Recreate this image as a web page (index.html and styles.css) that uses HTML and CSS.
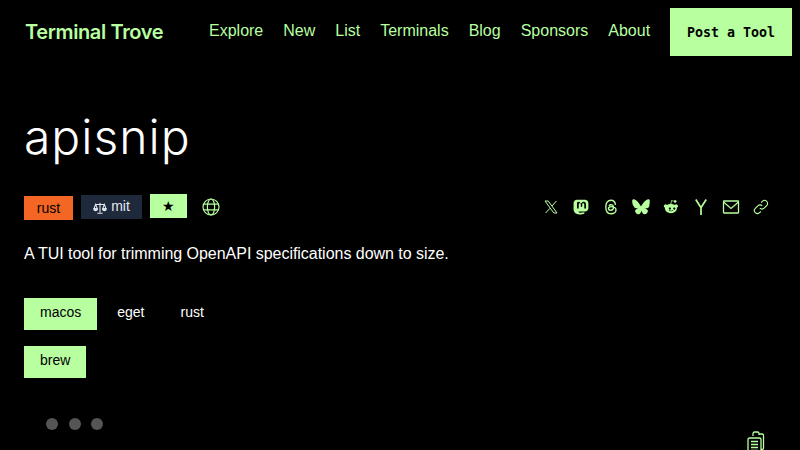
FILE: index.html
```html
<!DOCTYPE html>
<html lang="en">
<head>
    <meta charset="UTF-8">
    <meta name="viewport" content="width=device-width, initial-scale=1.0">
    <title>apisnip - Terminal Trove</title>
    <link rel="stylesheet" href="styles.css">
</head>
<body>
    <nav class="topbar">
        <a class="logo" href="#">Terminal Trove</a>
        <div class="nav-links">
            <a href="#">Explore</a>
            <a href="#">New</a>
            <a href="#">List</a>
            <a href="#">Terminals</a>
            <a href="#">Blog</a>
            <a href="#">Sponsors</a>
            <a href="#">About</a>
        </div>
        <a class="post-btn" href="#">Post a Tool</a>
    </nav>

    <main class="tool">
        <h1>apisnip</h1>
        <div class="meta">
            <div class="badges">
                <span class="badge badge-rust">rust</span>
                <span class="badge badge-mit">
                    <svg class="scale" viewBox="0 0 16 16" fill="none" stroke="currentColor" stroke-width="1.2">
                        <path d="M8 2v11M5 14h6M3 4h10M3 4l-2 5h4zM13 4l-2 5h4z"/>
                        <path d="M1 9a2 2 0 0 0 4 0zM11 9a2 2 0 0 0 4 0z" fill="currentColor"/>
                    </svg>
                    mit
                </span>
                <span class="badge badge-star">★</span>
                <svg class="icon globe" viewBox="0 0 18 18" fill="none" stroke="currentColor" stroke-width="1.2">
                    <circle cx="9" cy="9" r="8"/>
                    <ellipse cx="9" cy="9" rx="3.6" ry="8"/>
                    <path d="M1.6 6.2h14.8M1.6 11.8h14.8"/>
                </svg>
            </div>
            <div class="share">
                <svg class="icon" viewBox="0 0 16 16" fill="none" stroke="currentColor" stroke-width="1">
                    <path d="M2 2h3.2l8.8 12h-3.2zM13.4 2 9 7M7 9.300 2.600 14"/>
                </svg>
                <svg class="icon" viewBox="0 0 16 16">
                    <path fill="currentColor" fill-rule="evenodd" d="M4 .8h8c2 0 3.400 1.400 3.400 3.400v5c0 2-1.500 3.200-3.400 3.300H8.200c-1 0-2-.1-2.700-.3.200 1 1 1.500 2.400 1.500 1.200 0 2.400-.2 3.400-.5v1.500c-1.200.6-2.500.8-3.800.8-3.200 0-6.500-.9-6.900-5C.5 9 .6 7.500.6 4.200.6 2.200 2 .8 4 .8zM4 9.500h1.700V5.600c0-.9.400-1.300 1-1.300.7 0 1.100.5 1.100 1.400v2h1.400v-2c0-.9.400-1.400 1.100-1.400.6 0 1 .4 1 1.300v3.900H13v-4c0-1.800-1-2.700-2.300-2.700-.9 0-1.500.4-1.900 1L8 4.500l-.8-.7c-.4-.6-1-1-1.900-1C4 2.800 4 3.700 4 5.500z"/>
                </svg>
                <svg class="icon" viewBox="0 0 16 16" fill="none" stroke="currentColor" stroke-width="1.400">
                    <path d="M12.500 5.800C12 2.800 10.300 1.300 8 1.300 4.500 1.300 2.800 4 2.800 8s1.700 6.700 5.200 6.700c3 0 5-1.700 5-3.700 0-2.200-2-3.400-4.600-3.400-1.800 0-2.900.7-2.900 1.900 0 1.100 1 1.800 2.300 1.800 1.700 0 2.700-1.100 2.700-3 0-1.600-.9-2.600-2.400-2.600-1 0-1.700.4-2.200 1.100"/>
                </svg>
                <svg class="icon icon-wide" viewBox="0 0 18 16">
                    <path fill="currentColor" d="M4 1.200C6 2.700 8.100 5.700 9 7.400c.9-1.700 3-4.700 5-6.200 1.500-1.100 3.800-1.900 3.800.8 0 .5-.3 4.500-.5 5.100-.6 2.200-2.800 2.700-4.700 2.400 3.400.6 4.200 2.500 2.400 4.400-3.500 3.600-5-.9-5.400-2-.1-.2-.1-.3-.1-.2 0-.1 0 0-.1.200-.4 1.100-1.900 5.600-5.400 2-1.800-1.900-1-3.800 2.400-4.400-1.900.3-4.100-.2-4.700-2.400C.500 6.500.2 2.500.2 2c0-2.700 2.300-1.900 3.800-.8z"/>
                </svg>
                <svg class="icon" viewBox="0 0 16 16">
                    <path fill="currentColor" fill-rule="evenodd" d="M8.200 1.200 11 1.800a1.300 1.300 0 1 1-.1.800L8.700 2.100 8.300 5c1.400.1 2.600.5 3.500 1.100a1.700 1.700 0 1 1 2 2.600c0 .2.100.4.100.6 0 2.700-2.700 4.900-6 4.900s-6-2.200-6-4.900c0-.2 0-.4.100-.6a1.700 1.700 0 1 1 2-2.600c.9-.6 2.100-1 3.400-1.100zM5.800 9.600a1.100 1.100 0 1 0 0-.1zm4.400 0a1.100 1.100 0 1 0 0-.1zM5.700 11.600c1.300 1 3.300 1 4.600 0l-.4-.5c-1 .7-2.800.7-3.800 0z"/>
                </svg>
                <svg class="icon" viewBox="0 0 16 16" fill="none" stroke="currentColor" stroke-width="1.700">
                    <path d="M2.800 .5 8 8.600 13.200 .5M8 8.600V16"/>
                </svg>
                <svg class="icon icon-wide" viewBox="0 0 18 16" fill="none" stroke="currentColor" stroke-width="1.300">
                    <rect x="1.500" y="2" width="15" height="12" rx=".5"/>
                    <path d="M1.500 3 9 9.500 16.500 3"/>
                </svg>
                <svg class="icon" viewBox="0 0 16 16" fill="none" stroke="currentColor" stroke-width="1.100">
                    <path d="M6.800 9.200a3 3 0 0 0 4.300 0l2.600-2.600a3 3 0 0 0-4.300-4.300L8.200 3.500"/>
                    <path d="M9.200 6.800a3 3 0 0 0-4.300 0L2.300 9.400a3 3 0 0 0 4.300 4.300l1.200-1.200"/>
                </svg>
            </div>
        </div>
        <p class="tagline">A TUI tool for trimming OpenAPI specifications down to size.</p>
        <div class="tabs">
            <a class="tab tab-on" href="#">macos</a>
            <a class="tab" href="#">eget</a>
            <a class="tab" href="#">rust</a>
        </div>
        <div class="tabs">
            <a class="tab tab-on" href="#">brew</a>
        </div>
        <div class="terminal-bar">
            <div class="dots">
                <span></span>
                <span></span>
                <span></span>
            </div>
            <svg class="clip" viewBox="0 0 20 24" fill="none" stroke="currentColor" stroke-width="1.300">
                <path d="M7 6V3.500C7 2.500 7.800 2 8.500 2h3c.8 0 1.500.5 1.500 1.500V5M13 4h3c1 0 1.500.6 1.500 1.500V18c0 1-.5 1.500-1.500 1.500h-1"/>
                <rect x="2" y="8" width="13" height="16" rx="1.500"/>
                <path d="M5 11.500h7M5 14.500h7M5 17.500h7M5 20.500h7" stroke-width="1.500"/>
            </svg>
        </div>
    </main>
</body>
</html>
```

FILE: styles.css
```css
html, body {
    margin: 0;
    height: 450px;
    overflow: hidden;
}
body {
    font-family: 'Liberation Sans', sans-serif;
    background-color: #000;
    color: #fff;
}
a {
    text-decoration: none;
    color: inherit;
}
.topbar {
    display: flex;
    align-items: center;
    height: 48px;
    padding: 8px 8px 0 25px;
    color: #b8ffa0;
}
.logo {
    font-family: 'Inter', sans-serif;
    font-size: 20px;
    font-weight: 600;
    letter-spacing: -0.37px;
    width: 184px;
    flex: none;
    white-space: nowrap;
}
.nav-links {
    display: flex;
    gap: 20px;
    font-size: 16px;
    flex: 1;
    margin-bottom: 3px;
}
.post-btn {
    display: flex;
    align-items: center;
    justify-content: center;
    width: 122px;
    height: 48px;
    background: #b8ffa0;
    color: #000;
    font-family: 'DejaVu Sans Mono', monospace;
    font-size: 13.3px;
    font-weight: 700;
}
.tool {
    padding: 0 24px;
}
h1 {
    font-family: 'Inter', sans-serif;
    font-size: 48px;
    font-weight: 300;
    letter-spacing: 1px;
    line-height: 56px;
    margin: 53px 0 0;
}
.meta {
    display: flex;
    justify-content: space-between;
    align-items: center;
    margin-top: 29px;
    height: 26px;
}
.badges {
    display: flex;
    align-items: center;
    gap: 8px;
}
.badge {
    display: flex;
    align-items: center;
    justify-content: center;
    font-size: 14px;
    height: 24px;
}
.badge-rust {
    width: 49px;
    background: #f46623;
    color: #000;
    margin-top: 2px;
}
.badge-mit {
    width: 61px;
    gap: 4px;
    background: #1e293b;
    color: #e2e8f0;
    padding-bottom: 3px;
    height: 21px;
}
.badge-star {
    width: 37px;
    background: #b8ffa0;
    color: #000;
    margin-top: -2px;
}
.scale {
    width: 14px;
    height: 14px;
    margin-top: 4px;
}
.icon {
    width: 16px;
    height: 16px;
    color: #b8ffa0;
    flex: none;
}
.globe {
    width: 18px;
    height: 18px;
    margin-left: 7px;
}
.share {
    display: flex;
    align-items: center;
}
.share .icon {
    margin: 0 7px;
}
.share .icon-wide {
    width: 18px;
    margin: 0 6px;
}
.tagline {
    font-size: 16px;
    letter-spacing: -0.03px;
    line-height: 24px;
    margin: 22px 0 0;
}
.tabs {
    display: flex;
    margin-top: 16px;
}
.tagline + .tabs {
    margin-top: 32px;
}
.tab {
    display: block;
    font-size: 14px;
    line-height: 20px;
    padding: 4px 16px 8px;
    height: 20px;
    margin-right: 4px;
}
.tab-on {
    background: #b8ffa0;
    color: #000;
}
.terminal-bar {
    display: flex;
    justify-content: space-between;
    margin-top: 40px;
    padding: 0 10px 0 22px;
}
.dots {
    display: flex;
    gap: 10.500px;
}
.dots span {
    width: 12px;
    height: 12px;
    border-radius: 50%;
    background: #555;
}
.clip {
    width: 20px;
    height: 24px;
    color: #b8ffa0;
    margin-top: 12px;
}
```
